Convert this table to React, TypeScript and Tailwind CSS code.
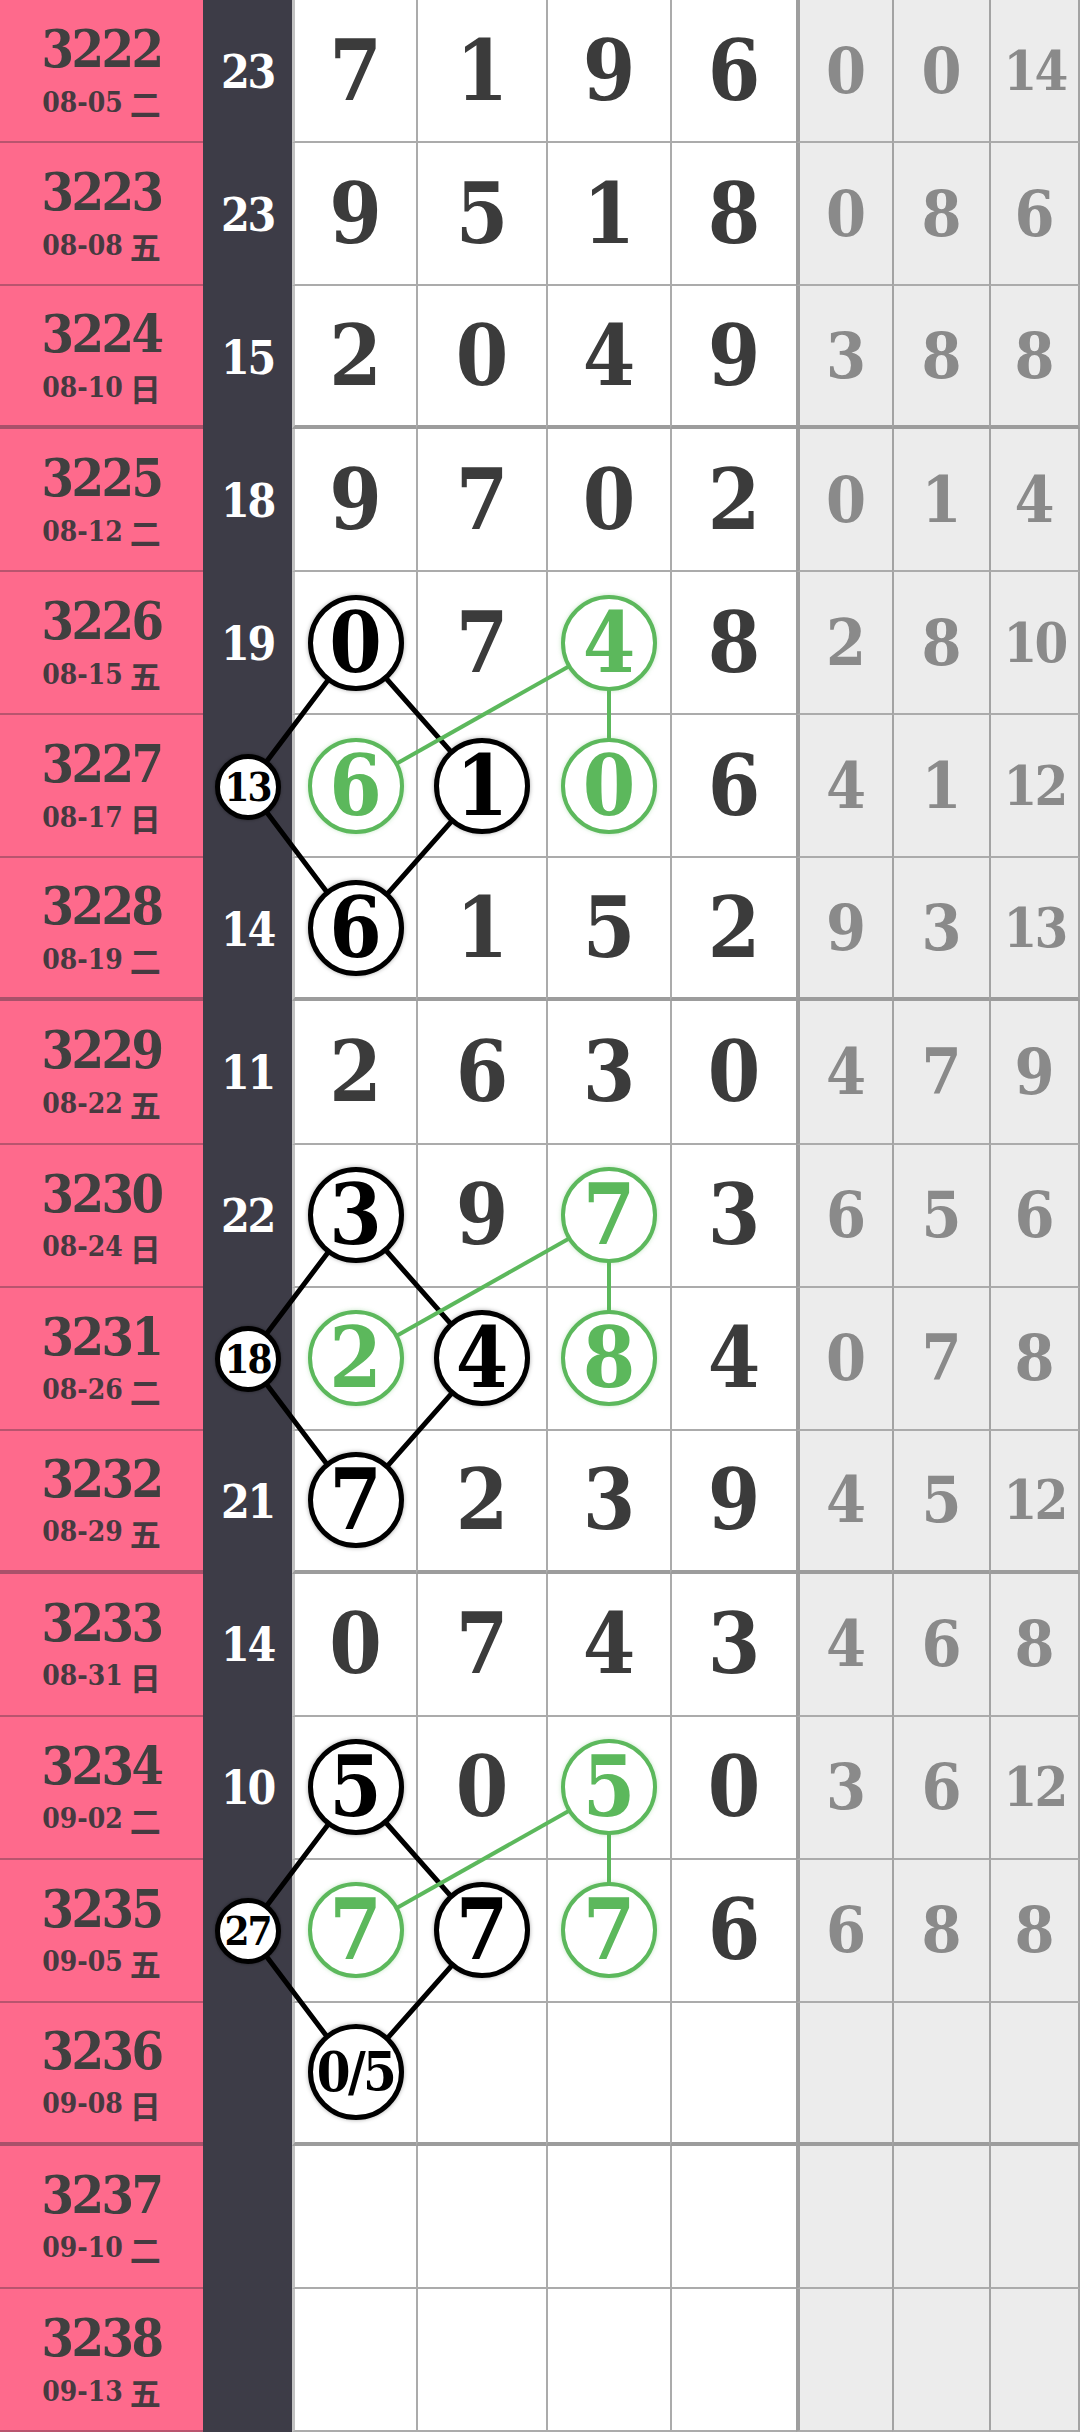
import React from "react";

type Row = {
  n: string;
  d: string;
  w: string;
  s: string;
  c: string[];
  g: string[];
  m?: "top" | "mid" | "bot";
};

const rows: Row[] = [
  { n: "3222", d: "08-05", w: "二", s: "23", c: ["7", "1", "9", "6"], g: ["0", "0", "14"] },
  { n: "3223", d: "08-08", w: "五", s: "23", c: ["9", "5", "1", "8"], g: ["0", "8", "6"] },
  { n: "3224", d: "08-10", w: "日", s: "15", c: ["2", "0", "4", "9"], g: ["3", "8", "8"] },
  { n: "3225", d: "08-12", w: "二", s: "18", c: ["9", "7", "0", "2"], g: ["0", "1", "4"] },
  { n: "3226", d: "08-15", w: "五", s: "19", c: ["0", "7", "4", "8"], g: ["2", "8", "10"], m: "top" },
  { n: "3227", d: "08-17", w: "日", s: "13", c: ["6", "1", "0", "6"], g: ["4", "1", "12"], m: "mid" },
  { n: "3228", d: "08-19", w: "二", s: "14", c: ["6", "1", "5", "2"], g: ["9", "3", "13"], m: "bot" },
  { n: "3229", d: "08-22", w: "五", s: "11", c: ["2", "6", "3", "0"], g: ["4", "7", "9"] },
  { n: "3230", d: "08-24", w: "日", s: "22", c: ["3", "9", "7", "3"], g: ["6", "5", "6"], m: "top" },
  { n: "3231", d: "08-26", w: "二", s: "18", c: ["2", "4", "8", "4"], g: ["0", "7", "8"], m: "mid" },
  { n: "3232", d: "08-29", w: "五", s: "21", c: ["7", "2", "3", "9"], g: ["4", "5", "12"], m: "bot" },
  { n: "3233", d: "08-31", w: "日", s: "14", c: ["0", "7", "4", "3"], g: ["4", "6", "8"] },
  { n: "3234", d: "09-02", w: "二", s: "10", c: ["5", "0", "5", "0"], g: ["3", "6", "12"], m: "top" },
  { n: "3235", d: "09-05", w: "五", s: "27", c: ["7", "7", "7", "6"], g: ["6", "8", "8"], m: "mid" },
  { n: "3236", d: "09-08", w: "日", s: "", c: ["0/5", "", "", ""], g: ["", "", ""], m: "bot" },
  { n: "3237", d: "09-10", w: "二", s: "", c: ["", "", "", ""], g: ["", "", ""] },
  { n: "3238", d: "09-13", w: "五", s: "", c: ["", "", "", ""], g: ["", "", ""] },
];

const H = 2432 / 17;
const rc = (i: number) => H * i + H / 2;
const XS = 247.5;
const X1 = 355.5;
const X2 = 482;
const X3 = 609;

const groups = [4, 8, 12];

function marksFor(m?: Row["m"]): (null | "b" | "g")[] {
  if (m === "top") return ["b", null, "g", null];
  if (m === "mid") return ["g", "b", "g", null];
  if (m === "bot") return ["b", null, null, null];
  return [null, null, null, null];
}

function Digit({ v, mark }: { v: string; mark: null | "b" | "g" }) {
  if (!v) return null;
  if (mark === "b") {
    return (
      <div className="relative z-20 flex h-[96px] w-[96px] items-center justify-center rounded-full border-[5px] border-black bg-white text-black shadow-[0_0_4px_rgba(0,0,0,0.35)]">
        <span className={v.length > 1 ? "text-[54px] leading-none tracking-[-0.05em]" : "text-[84px] leading-none"}>{v}</span>
      </div>
    );
  }
  if (mark === "g") {
    return (
      <div className="relative z-20 flex h-[96px] w-[96px] items-center justify-center rounded-full border-4 border-[#5cb85c] bg-white text-[#5cb85c] shadow-[0_0_4px_rgba(92,184,92,0.35)]">
        <span className="text-[84px] leading-none">{v}</span>
      </div>
    );
  }
  return <span className="text-[84px] leading-none text-[#3b3b3b]">{v}</span>;
}

export default function App() {
  return (
    <div className="relative flex h-[2432px] w-[1080px] flex-col overflow-hidden bg-white font-['DejaVu_Serif_Condensed','DejaVu_Serif','Noto_Sans_CJK_SC',serif] font-bold font-stretch-condensed">
      {rows.map((r) => {
        const end = Number(r.n) % 4 === 0;
        const bb = end ? "border-b-4 border-b-[#9c9c9c]" : "border-b-2 border-b-[#ababab]";
        const marks = marksFor(r.m);
        return (
          <div key={r.n} className="flex min-h-0 flex-1">
            {/* period + date */}
            <div
              className={`flex w-[203px] shrink-0 flex-col items-center justify-center gap-[12px] bg-[#fe6a8c] ${
                end ? "border-b-4 border-b-[#a9516a]" : "border-b-2 border-b-[#b9546e]"
              }`}
            >
              <div className="text-[52px] leading-none tracking-[-0.05em] text-[#404040]">{r.n}</div>
              <div className="flex items-center gap-[7px] text-[28px] leading-none text-[#463a40]">
                <span>{r.d}</span>
                <span className="font-['Noto_Sans_CJK_SC',sans-serif] text-[31px] font-bold">{r.w}</span>
              </div>
            </div>

            {/* sum column */}
            <div className="flex w-[89px] shrink-0 items-center justify-center bg-[#3d3c47]">
              {r.m === "mid" ? (
                <div className="relative z-20 flex h-[66px] w-[66px] items-center justify-center rounded-full border-[5px] border-black bg-white text-[40px] leading-none tracking-[-0.05em] text-black shadow-[0_0_3px_rgba(0,0,0,0.4)]">
                  {r.s}
                </div>
              ) : (
                <span className="text-[46px] leading-none tracking-[-0.05em] text-white">{r.s}</span>
              )}
            </div>

            {/* digits */}
            <div className={`flex w-[124px] shrink-0 items-center justify-center border-l-[3px] border-l-[#c2c2c2] bg-white ${bb}`}>
              <Digit v={r.c[0]} mark={marks[0]} />
            </div>
            <div className={`flex w-[130px] shrink-0 items-center justify-center border-l-2 border-l-[#ababab] bg-white ${bb}`}>
              <Digit v={r.c[1]} mark={marks[1]} />
            </div>
            <div className={`flex w-[124px] shrink-0 items-center justify-center border-l-2 border-l-[#ababab] bg-white ${bb}`}>
              <Digit v={r.c[2]} mark={marks[2]} />
            </div>
            <div className={`flex w-[126px] shrink-0 items-center justify-center border-l-2 border-l-[#ababab] bg-white ${bb}`}>
              <Digit v={r.c[3]} mark={marks[3]} />
            </div>

            {/* gaps */}
            {r.g.map((v, k) => (
              <div
                key={k}
                className={`flex shrink-0 items-center justify-center bg-[#ececec] ${bb} ${
                  k === 0
                    ? "w-[96px] border-l-4 border-l-[#9e9e9e]"
                    : k === 1
                    ? "w-[97px] border-l-2 border-l-[#a3a3a3]"
                    : "w-[91px] border-l-2 border-r-2 border-l-[#a3a3a3] border-r-[#a3a3a3]"
                }`}
              >
                <span
                  className={
                    v.length > 1
                      ? "text-[54px] leading-none tracking-[-0.05em] text-[#8a8a8a]"
                      : "text-[64px] leading-none text-[#8a8a8a]"
                  }
                >
                  {v}
                </span>
              </div>
            ))}
          </div>
        );
      })}

      {/* connector lines */}
      <svg
        className="pointer-events-none absolute inset-0 z-10"
        width={1080}
        height={2432}
        viewBox="0 0 1080 2432"
      >
        {groups.map((g) => (
          <g key={g}>
            <g stroke="#000" strokeWidth={5} strokeLinecap="round">
              <line x1={XS} y1={rc(g + 1)} x2={X1} y2={rc(g)} />
              <line x1={X1} y1={rc(g)} x2={X2} y2={rc(g + 1)} />
              <line x1={X2} y1={rc(g + 1)} x2={X1} y2={rc(g + 2)} />
              <line x1={X1} y1={rc(g + 2)} x2={XS} y2={rc(g + 1)} />
            </g>
            <g stroke="#5cb85c" strokeWidth={4}>
              <line x1={X1} y1={rc(g + 1)} x2={X3} y2={rc(g)} />
              <line x1={X3} y1={rc(g)} x2={X3} y2={rc(g + 1)} />
            </g>
          </g>
        ))}
      </svg>
    </div>
  );
}
